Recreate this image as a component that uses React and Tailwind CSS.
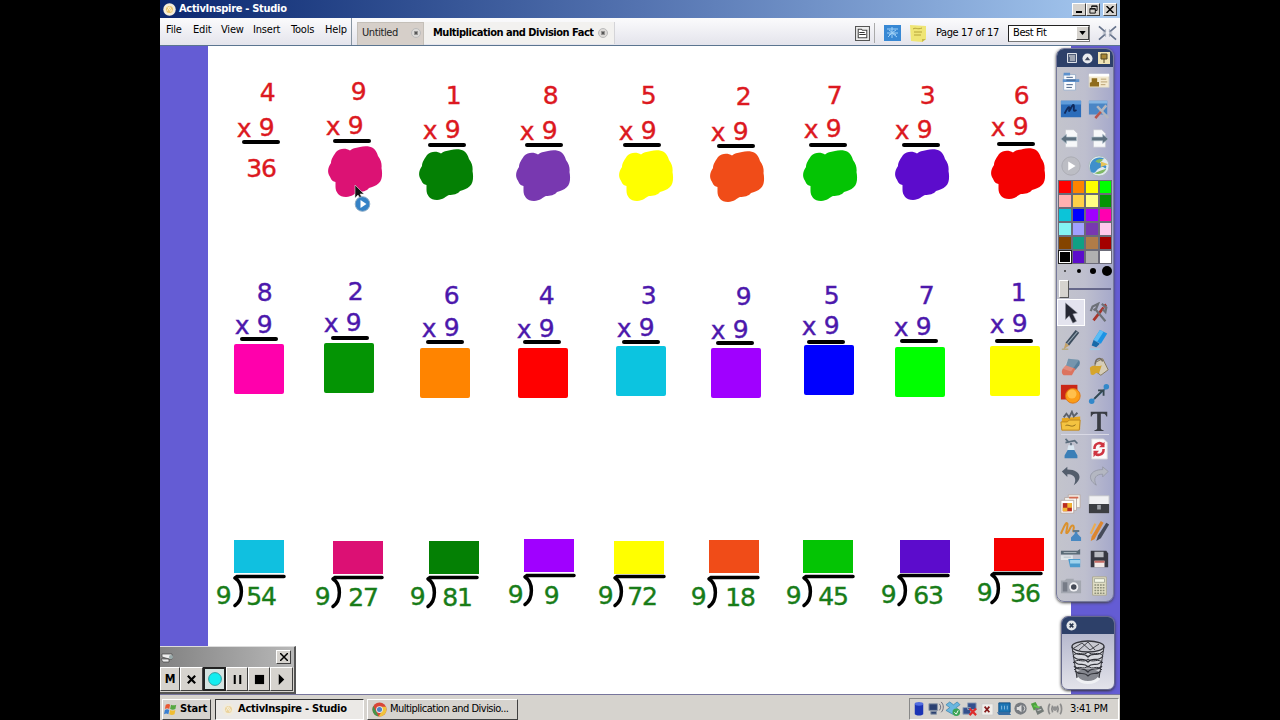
import React from "react";

const UI = "font-['DejaVu_Sans_Condensed','DejaVu_Sans',sans-serif] [font-stretch:condensed]";
const DIGIT = "absolute whitespace-nowrap leading-none text-[25px] -translate-x-1/2 -translate-y-1/2 font-['DejaVu_Sans',sans-serif] [font-stretch:normal] tracking-[-1.2px] [-webkit-text-stroke:0.4px_currentColor]";

// top digit [text, x, y], nine [x, y], bar [x, y], cover [x, y, colour]
const ROW1 = [
  { t: ["4", 267, 92], n: [266, 127], b: [242, 142], c: null },
  { t: ["9", 358, 91], n: [355, 125], b: [333, 141], c: [327.5, 146, "#dc1274"] },
  { t: ["1", 453, 95], n: [452, 129], b: [428, 145], c: [419, 149, "#048004"] },
  { t: ["8", 550, 95], n: [549, 130], b: [525, 145], c: [516, 150, "#7838b0"] },
  { t: ["5", 648, 95], n: [648, 130], b: [623, 145], c: [618.5, 150, "#ffff00"] },
  { t: ["2", 743, 96], n: [740, 131], b: [717, 146], c: [709.5, 151, "#f04c18"] },
  { t: ["7", 834, 95], n: [833, 128], b: [809, 145], c: [803, 150, "#04c404"] },
  { t: ["3", 927, 95], n: [924, 129], b: [902, 145], c: [895, 149, "#5c0ccc"] },
  { t: ["6", 1021, 95], n: [1020, 126], b: [997, 144], c: [990.5, 148, "#f40000"] },
];
const ROW2 = [
  { t: ["8", 264, 292], n: [264, 324], b: [240, 339], c: [234, 344, "#ff00ac"] },
  { t: ["2", 355, 291], n: [353, 322], b: [331, 338], c: [324, 343, "#049404"] },
  { t: ["6", 451, 295], n: [451, 327], b: [426, 342], c: [420, 348, "#ff8400"] },
  { t: ["4", 546, 295], n: [546, 328], b: [523, 342], c: [518, 348, "#ff0000"] },
  { t: ["3", 648, 295], n: [646, 327], b: [622, 342], c: [616, 346, "#0cc4e0"] },
  { t: ["9", 743, 296], n: [740, 329], b: [716, 343], c: [711, 348, "#a000ff"] },
  { t: ["5", 831, 295], n: [831, 325], b: [807, 342], c: [804, 345, "#0000ff"] },
  { t: ["7", 926, 295], n: [923, 326], b: [900, 341], c: [895, 347, "#00ff00"] },
  { t: ["1", 1018, 292], n: [1019, 323], b: [995, 341], c: [990, 346, "#ffff00"] },
];
// number, nine x, number x, y, bracket x, bracket y, cover x, cover y, colour
const ROW3 = [
  ["54", 223, 261, 595, 235, 576, 234, 540, "#10c0e0"],
  ["27", 322, 363, 596, 333, 577, 333, 541, "#dc1074"],
  ["81", 417, 457, 596, 428, 577, 429, 541, "#048004"],
  ["9", 515, 551, 594, 525, 575, 524, 539, "#a000ff"],
  ["72", 605, 642, 595, 615, 576, 614, 541, "#ffff00"],
  ["18", 698, 740, 596, 709, 577, 709, 540, "#f04c18"],
  ["45", 793, 833, 595, 804, 576, 803, 540, "#04c404"],
  ["63", 888, 928, 594, 899, 575, 900, 540, "#5c0ccc"],
  ["36", 984, 1025, 592, 992, 573, 994, 538, "#f40000"],
];

function Num({ x, y, children, color }) {
  return <span className={`${DIGIT} ${color}`} style={{ left: x - 160, top: y - 46 }}>{children}</span>;
}

function Problem({ p, color, round }) {
  const [bx, by] = p.b;
  return (
    <>
      <Num x={p.t[1]} y={p.t[2]} color={color}>{p.t[0]}</Num>
      <Num x={p.n[0] - 22.5} y={p.n[1] + 0.5} color={color}>x</Num>
      <Num x={p.n[0]} y={p.n[1]} color={color}>9</Num>
      <i className="absolute h-[4px] w-[38px] rounded-full bg-black" style={{ left: bx - 160, top: by - 48 }} />
      {p.c && !round && (
        <i className="absolute h-[50px] w-[50px] rounded-[2px]" style={{ left: p.c[0] - 160, top: p.c[1] - 46, background: p.c[2] }} />
      )}
      {p.c && round && (
        <svg className="absolute h-[51px] w-[55px]" viewBox="0 0 55 51" style={{ left: p.c[0] - 160, top: p.c[1] - 46 }}>
          <path fill={p.c[2]} d="M22 4.5C26 1.5 29 2 32 1C36 0 42 0 45 2C48 4 49 7 50 10C53 14 54 18 53.5 22C54.5 27 54.5 34 51 37C48 40 44 41 41 42C39 45 34 46 30 46C27 47 24 51 18 51C11 51 7.500 46 7.500 41V36C3 35 3 32 1.500 30C-1 26 0 21 3 17C3 13 6 9 8 6C12 2 18 2 22 4.500Z" />
        </svg>
      )}
    </>
  );
}

function Division({ d }) {
  const [n, x9, xn, y, bx, by, cx, cy, col] = d;
  return (
    <>
      <i className="absolute h-[33px] w-[50px]" style={{ left: cx - 160, top: cy - 46, background: col }} />
      <Num x={x9} y={y} color="text-[#187c18]">9</Num>
      <svg className="absolute h-[36px] w-[58px]" viewBox="0 0 58 36" style={{ left: bx - 163, top: by - 49 }} fill="none" stroke="#000" strokeLinecap="round" strokeWidth="3.5">
        <path d="M3 5L5 3.5H52M3 5C11.500 10 11.500 27 3 32.500" />
      </svg>
      <Num x={xn} y={y + 1} color="text-[#187c18]">{n}</Num>
    </>
  );
}

const page = <path d="M6 3h9l4 4v15H6z" fill="#f7f8fa" stroke="#c2c5cc" strokeWidth=".6" />;
const tools = <><path d="M6 20L17 6M17 5l3-2" stroke="#a8352c" strokeWidth="3" /><path d="M19 21L8 8M3 10l2-5 6-3-2 5-3 2M15 2l5 4-1 5-3-3" fill="none" stroke="#6d7178" strokeWidth="2.4" /></>;

const ICONS = {
  menu: <><path d="M4 5h13v17H4z" fill="#fafcff" stroke="#9bafc9" /><path d="M4 3h7v3H4zM3 10h18v3H3z" fill="#5d91cc" /><path d="M7 8h7M7 11h10M7 16h7M7 19h6" stroke="#38547e" /></>,
  card: <><path d="M1 5h22v14H1z" fill="#f4ead0" stroke="#c8c8c8" /><path d="M1 4h22v3H1z" fill="#fff" /><path d="M4 9h6v4h2v5H2v-4l2-1z" fill="#8f6c1d" /><path d="M14 10h6M14 13h7M14 16h5" stroke="#b59c6c" /></>,
  annotate: <><path d="M1 3h22v18H1z" fill="#2b6cba" /><path d="M1 3h22v4H1z" fill="#5f9bda" /><path d="M5 17c4-8 6-9 5-4-1 5 4-8 5-5s-2 8 3 5" fill="none" stroke="#102a5c" strokeWidth="2" /></>,
  deskTools: <><path d="M1 3h20v15H1z" fill="#4b86c5" /><path d="M1 3h20v3H1z" fill="#86b5e3" /><path d="M9 21L20 8M10 9l12 13" stroke="#b5b6be" strokeWidth="2.8" /><path d="M8 22l6-7" stroke="#b8564e" strokeWidth="2.8" /></>,
  prev: <>{page}<path d="M1 13l6-5v3h11v4H7v3z" fill="#5c6f7e" stroke="#a9bac6" strokeWidth=".7" /></>,
  next: <>{page}<path d="M22 13l-6-5v3H4v4h12v3z" fill="#5c6f7e" stroke="#a9bac6" strokeWidth=".7" /></>,
  play: <><circle cx="12" cy="12" r="10" fill="#bcbdc4" stroke="#aaabb2" /><path d="M9 7l8 5-8 5z" fill="#fff" /></>,
  express: <><circle cx="12" cy="12" r="11" fill="#dfeaf0" stroke="#abb9bb" /><path d="M3 18C-1 7 9 0 18 4c-6 0-7 5-2 6 4 1 5 2 3 5-3-4-6-1-9 1-2 3-4 5-7 2z" fill="#3f8fcb" /><path d="M8 7c3-3 6-3 9-2l-5 4zM7 20c5 2 11 0 13-5l-6 2z" fill="#7fb866" /><path d="M14 7l8 3-8 3z" fill="#e8c456" /></>,
  pointer: <path d="M6 1l13 11-5 1 4 8-4 2-4-8-4 4z" fill="#252732" stroke="#8b8d98" strokeWidth=".6" />,
  tools,
  pen: <><path d="M17 1l4 3L10 18l-4-3z" fill="#3d4d5e" /><path d="M19 3L8 16" stroke="#9cacb8" strokeWidth="1.2" /><path d="M6 15l4 3-6 4z" fill="#c5a268" /><path d="M2 22h7" stroke="#b19c55" /></>,
  highlighter: <><path d="M13 1l8 4-7 11-8-4z" fill="#1c93e5" /><path d="M13 1l4 2-7 11-4-2z" fill="#5bbcf5" /><path d="M6 12l7 4-4 4-5-2z" fill="#176aa9" /><path d="M2 22h11" stroke="#9ec9e4" strokeWidth="2" /></>,
  eraser: <><path d="M9 3l11 1c2 1 2 4 1 6l-4 5-11-3z" fill="#577e9b" /><path d="M6 10l11 4-4 7H4c-3-2-2-5-1-7z" fill="#dc735e" /><path d="M9 3L3 14l9 3 9-13z" fill="#fff" opacity=".18" /></>,
  fill: <><path d="M8 7l8-4 6 12-8 6-7-5z" fill="#d6cdb8" stroke="#817457" /><path d="M2 13c4-5 7 0 13-3l-3 9c-4-3-5 4-9 1z" fill="#d6a52b" /><path d="M8 9c0-7 6-8 8-3" fill="none" stroke="#746c5f" strokeWidth="1.6" /></>,
  shape: <><path d="M1 2h18v16H1z" fill="#ca2717" /><circle cx="14" cy="14" r="8" fill="#fb9d18" stroke="#dd7512" /><circle cx="13" cy="12" r="5" fill="#ffc04d" /></>,
  connector: <><path d="M4 20L21 4" stroke="#4889b5" strokeWidth="2" /><path d="M7 17L16 8M11 8h6v6" stroke="#35464f" strokeWidth="2" fill="none" /><circle cx="20" cy="4" r="3" fill="#3388ca" /><circle cx="4" cy="20" r="3" fill="#3388ca" /></>,
  resource: <><path d="M2 9l20-2v14H2z" fill="#e6a620" /><path d="M1 13h7l2-2h12l-1 11H2z" fill="#f4c340" stroke="#bd851c" /><path d="M4 8l3-4 3 4 3-6 2 5 4-4" fill="none" stroke="#5b616a" strokeWidth="2" /><path d="M6 17c4-2 6 3 11-1" stroke="#8a6819" fill="none" /></>,
  text: <path d="M3 2h18v5h-1c-1-3-2-3-6-3v16c0 1 1 2 3 2v1H7v-1c2 0 3-1 3-2V4C6 4 5 4 4 7H3z" fill="#393c43" />,
  clear: <><path d="M9 9h6v3l4 7v3H5v-3l4-7z" fill="#3b7fb7" /><path d="M9 8h6l1 5H8z" fill="#d9e6f0" /><path d="M6 1l4 4M6 5l10-2 3 3M12 4v4" fill="none" stroke="#5c6d7d" strokeWidth="1.8" /></>,
  reset: <><path d="M4 1h13l4 4v18H4z" fill="#fafafa" stroke="#d4d4d8" /><path d="M7 12c0-7 7-8 10-4M17 12c0 7-7 8-10 4" stroke="#cf3541" strokeWidth="2.8" fill="none" /><path d="M18 4v6h-6zM6 21v-7h6z" fill="#cf3541" /></>,
  undo: <path d="M2 7l6-5v3c14 0 18 10 7 17C19 14 15 10 8 10v3z" fill="#535d6c" />,
  redo: <path d="M22 7l-6-5v3C2 5-2 15 9 22 5 14 9 10 16 10v3z" fill="#b4b7c2" stroke="#9093a0" strokeWidth=".8" />,
  pages: <><path d="M9 2h13v14H9z" fill="#faf6ef" stroke="#b7aaa5" /><path d="M5 5h13v14H5z" fill="#faf6ef" stroke="#b7aaa5" /><path d="M1 8h14v14H1z" fill="#fff" stroke="#b7aaa5" /><path d="M3 11h10v9H3z" fill="#ba2d20" /><path d="M8 11h5v5H8zM3 16h5v4H3z" fill="#f1b534" /><path d="M10 4h10v2H10z" fill="#d26a51" /></>,
  reveal: <><path d="M1 3h22v10H1z" fill="#f1f1f3" stroke="#c0c2c7" /><path d="M1 12h22v10H1z" fill="#3c3e43" /><path d="M10 13h4v5h-4z" fill="#9c9fa5" /></>,
  magic: <><path d="M1 15C4 8 7 1 8 4s-3 12 0 10 3-9 6-8-1 6 1 7" fill="none" stroke="#db912c" strokeWidth="2.2" /><path d="M16 12h3v3l4 4v4H12v-4l4-4z" fill="#4788c2" /><path d="M14 12h7" stroke="#657987" strokeWidth="2" /></>,
  pens: <><path d="M14 1l3 2L7 21l-4 2 1-5z" fill="#dd862e" /><path d="M20 3l3 2-9 15-5 3 2-6z" fill="#454a59" /><path d="M8 4L3 15" stroke="#ecac50" strokeWidth="2.4" /></>,
  camera: <><path d="M1 3h18l3-2v6H1z" fill="#596a76" /><path d="M1 8h13v5H1z" fill="#dfe5e9" /><path d="M9 12h13v9H11z" fill="#4b9bcd" /><path d="M11 13h11v4H11z" fill="#9ed3ed" /><path d="M4 5h14M4 10h8" stroke="#b3bec6" /></>,
  save: <><path d="M3 3h17l2 3v15H3z" fill="#373842" /><path d="M7 4h10v6H7z" fill="#b9bac1" /><path d="M7 14h11v7H7z" fill="#f1e9e8" /><path d="M7 14h11v2H7z" fill="#c66b66" /></>,
  snapshot: <><path d="M1 6h4l2-2h8v2h8v14H1z" fill="#a3a7b0" /><circle cx="15" cy="13" r="5" fill="#efeff2" /><circle cx="15" cy="13" r="3" fill="#464b57" /><path d="M3 8h5v10H3z" fill="#777c87" /></>,
  calc: <><path d="M5 2h15v20H5z" fill="#e2dfc6" stroke="#aaa690" /><path d="M7 4h11v4H7z" fill="#f5f7e8" stroke="#a5a998" /><path d="M7 11h11M7 14h11M7 17h11M7 20h11" stroke="#8c8f7b" strokeWidth="1.7" strokeDasharray="2 1" /></>,
};

function Icon({ name }) {
  return (
    <div className={`flex items-center justify-center ${name === "pointer" ? "border border-white bg-[#e3e3ee]" : ""}`}>
      <svg viewBox="0 0 24 24" className="h-[22px] w-[22px]">{ICONS[name]}</svg>
    </div>
  );
}

const PALETTE = ["#ff0000", "#ff8400", "#ffff00", "#00ff00", "#ffb0b0", "#ffd048", "#ffff84", "#049404", "#0cc4d8", "#0000ff", "#a000ff", "#ff00b0", "#84f4f4", "#a0a0ff", "#7838b0", "#ffc8ec", "#844400", "#10a084", "#b07c48", "#a40000", "#000000", "#5c0ccc", "#b0b0b0", "#ffffff"];

function Toolbox() {
  return (
    <div className="absolute left-[896px] top-[2px] flex h-[554px] w-[58px] flex-col overflow-hidden rounded-[8px] border border-[#777a9b] bg-linear-to-r from-[#c3c4cc] via-[#bebfce] to-[#a6a9cb] shadow-[0_1px_3px_#444]">
      <div className="flex h-[18px] shrink-0 items-center justify-end gap-[5px] bg-[#2d4069] pr-[3px]">
        <svg viewBox="0 0 10 10" className="h-[10px] w-[10px]"><path d="M.5.5h9v9h-9z" fill="#4f5d79" stroke="#dee2e9" /><path d="M2 3h6M3 5h5M3 7h5" stroke="#eee" /></svg>
        <svg viewBox="0 0 12 12" className="h-[11px] w-[11px]"><circle cx="6" cy="6" r="5.5" fill="#e8eaee" /><path d="M3 8l3-4 3 4z" fill="#40485d" /></svg>
        <svg viewBox="0 0 12 12" className="h-[12px] w-[12px]"><path d="M0 0h12v12H0z" fill="#f0e3b4" /><path d="M3 2h6v5H3zM6 7v4" fill="#a88634" stroke="#554825" /></svg>
      </div>
      <div className="grid h-[113px] shrink-0 grid-cols-2 grid-rows-4">
        {["menu", "card", "annotate", "deskTools", "prev", "next", "play", "express"].map((n) => <Icon key={n} name={n} />)}
      </div>
      <div className="ml-px grid h-[84px] w-[54px] shrink-0 grid-cols-4 grid-rows-6">
        {PALETTE.map((c, i) => <i key={i} className={`border ${i === 20 ? "border-[#222] outline -outline-offset-2 outline-white" : "border-[#6b6b78]"}`} style={{ background: c }} />)}
      </div>
      <div className="ml-px grid h-[14px] w-[56px] shrink-0 grid-cols-4 items-center justify-items-center">
        <i className="h-[2px] w-[2px] rounded-full bg-[#333]" /><i className="h-[4px] w-[4px] rounded-full bg-black" /><i className="h-[6px] w-[6px] rounded-full bg-black" /><i className="h-[10px] w-[10px] rounded-full bg-black" />
      </div>
      <div className="flex h-[21px] shrink-0 items-center pl-[2px]">
        <i className="h-[18px] w-[10px] border border-[#555] border-l-white border-t-white bg-[#d6d3ce]" />
        <i className="h-[2px] w-[42px] bg-[#65678a]" />
      </div>
      <div className="grid h-[135px] shrink-0 grid-cols-2 grid-rows-5">
        {["pointer", "tools", "pen", "highlighter", "eraser", "fill", "shape", "connector", "resource", "text"].map((n) => <Icon key={n} name={n} />)}
      </div>
      <div className="mx-1 h-px shrink-0 bg-[#d9d9e5]" />
      <div className="grid h-[165px] shrink-0 grid-cols-2 grid-rows-6">
        {["clear", "reset", "undo", "redo", "pages", "reveal", "magic", "pens", "camera", "save", "snapshot", "calc"].map((n) => <Icon key={n} name={n} />)}
      </div>
    </div>
  );
}

function Trash() {
  return (
    <div className="absolute left-[901px] top-[570px] flex h-[74px] w-[54px] flex-col overflow-hidden rounded-[7px] border border-[#66698c] bg-linear-to-b from-[#a9acc5] to-[#e3e3ea] shadow-[0_1px_3px_#333]">
      <div className="flex h-[17px] shrink-0 items-center bg-[#2d4069] pl-[4px]">
        <svg viewBox="0 0 12 12" className="h-[11px] w-[11px]"><circle cx="6" cy="6" r="5.5" fill="#e3e6e9" /><path d="M4 4l4 4M8 4L4 8" stroke="#29364e" strokeWidth="1.7" /></svg>
      </div>
      <svg viewBox="0 0 36 46" className="mx-auto mt-[5px] h-[46px] w-[36px]" fill="none" stroke="#34353c">
        <path d="M2 7l4 31c5 7 19 7 24 0l4-31z" fill="#d9dae0" stroke="none" />
        <path d="M6 34c5-6 19-6 24 0l-1 6c-5 5-17 5-22 0z" fill="#85878f" stroke="none" />
        <path d="M3 12c5 7 10 0 15 6 5-6 10 1 15-6M3 17c5 7 10 0 15 6 5-6 10 1 15-6M4 22c5 7 9 0 14 6 5-6 9 1 14-6M4 27c5 6 9 0 14 6 5-6 9 0 14-6M5 32c5 5 9 0 13 5 4-5 8 0 13-5" strokeWidth="1.2" />
        <path d="M3 17c5-6 10 1 15-4 5 5 10-2 15 4M3 24c5-6 10 1 15-4 5 5 10-2 15 4M4 31c5-6 9 1 14-4 5 5 9-2 14 4" strokeWidth="1" />
        <ellipse cx="18" cy="7.5" rx="16" ry="5.500" fill="#c9cad2" strokeWidth="1.4" />
        <path d="M4 9l8-5 8 7 9-6M9 11l9-8 7 8" strokeWidth=".9" /><path d="M2 8l5 31M34 8l-5 31" />
        <path d="M7 39c5 6 17 6 22 0" stroke="#f0f1f4" strokeWidth="3" />
      </svg>
    </div>
  );
}

const RAISED = "border border-b-[#404040] border-l-white border-r-[#404040] border-t-white bg-[#d6d3ce]";

function Recorder() {
  const glyphs = [
    null,
    <path d="M2 2l8 8M10 2l-8 8" stroke="#000" strokeWidth="2.4" />,
    <circle cx="6" cy="6" r="5.500" fill="#12edf0" stroke="#2b8f92" strokeWidth=".7" />,
    <path d="M3 1v10M9 1v10" stroke="#000" strokeWidth="2.2" />,
    <path d="M1 1h10v10H1z" />,
    <path d="M3 0l6 6-6 6z" />,
  ];
  const sizes = ["w-[20px]", "w-[23px]", "w-[23px]", "w-[22px]", "w-[22px]", "w-[23px]"];
  return (
    <div className="absolute left-0 top-[600px] flex h-[48px] w-[136px] flex-col border-b-2 border-r-2 border-t border-b-[#555] border-r-[#555] border-t-[#ddd] bg-[#d6d3ce]">
      <div className="flex h-[20px] items-center justify-between bg-linear-to-r from-[#828282] to-[#b8b8b8] pr-[3px]">
        <svg viewBox="0 0 16 12" className="h-[12px] w-[16px]"><path d="M1 8h8v3H3zM2 3h10v5H9l-7-2z" fill="#eee" stroke="#444" strokeWidth=".7" /><circle cx="11" cy="6" r="2" fill="#9aa" /></svg>
        <div className={`flex h-[14px] w-[15px] items-center justify-center ${RAISED}`}><svg viewBox="0 0 8 8" className="h-[8px] w-[8px]"><path d="M0 0l8 8M8 0L0 8" stroke="#000" strokeWidth="1.5" /></svg></div>
      </div>
      <div className="flex flex-1">
        {glyphs.map((g, i) => (
          <div key={i} className={`flex h-[24px] items-center justify-center ${sizes[i]} ${i === 2 ? "border-2 border-[#222] bg-[#d5e3e1]" : RAISED}`}>
            {i === 0 ? <span className="text-[12px] font-bold leading-none">M</span> : <svg viewBox="0 0 12 12" className={i === 2 ? "h-[14px] w-[14px] shrink-0" : "h-[11px] w-[11px]"}>{g}</svg>}
          </div>
        ))}
      </div>
    </div>
  );
}

function CloseDot() {
  return <svg viewBox="0 0 10 10" className="h-[10px] w-[10px] shrink-0"><circle cx="5" cy="5" r="4.5" fill="#dcdad8" stroke="#bbb" /><path d="M3.5 3.5l3 3M6.5 3.5l-3 3" stroke="#555" strokeWidth="1.5" /></svg>;
}

function Logo() {
  return <svg viewBox="0 0 14 14" className="h-[13px] w-[13px] shrink-0"><circle cx="7" cy="7" r="6.7" fill="#f4edd9" /><circle cx="7" cy="7" r="3.8" fill="#ecc56a" /><path d="M4 9l3-5 3 5M5 4l4 6" stroke="#fff4d0" fill="none" /></svg>;
}

function Header() {
  const box = `flex h-[13px] w-[14px] items-center justify-center ${RAISED}`;
  return (
    <>
      <div className="flex h-[18px] items-center bg-linear-to-r from-[#0c2870] via-[#5473b0] to-[#a6c9f0] pl-[3px] pr-[3px] text-white">
        <Logo />
        <span className="ml-[3px] whitespace-nowrap pt-px text-[11px] font-bold tracking-[-0.3px]">ActivInspire - Studio</span>
        <div className="ml-auto flex">
          <div className={box}><i className="mt-[6px] h-[2px] w-[6px] bg-black" /></div>
          <div className={box}><svg viewBox="0 0 10 10" className="h-[9px] w-[9px]" fill="none" stroke="#000"><path d="M3 3V1h6v5H7M3 1.5h6M1 4h6v5H1zM1 4.5h6" /></svg></div>
          <div className={`ml-[3px] ${box}`}><svg viewBox="0 0 8 8" className="h-[7px] w-[8px]"><path d="M0 0l8 8M8 0L0 8" stroke="#000" strokeWidth="1.7" /></svg></div>
        </div>
      </div>
      <div className="flex h-[28px] border-b border-[#5b7590] bg-linear-to-b from-[#fbfbfc] to-[#e4e4ec] text-[11px] text-black">
        <div className="flex h-[24px] w-[191px] items-center whitespace-nowrap pl-[6px] tracking-[-0.2px]">
          <span className="w-[27px]">File</span><span className="w-[28px]">Edit</span><span className="w-[32px]">View</span><span className="w-[38px]">Insert</span><span className="w-[34px]">Tools</span><span>Help</span>
        </div>
        <div className="flex w-[73px] items-end border-l border-[#8794a1] pl-[5px]">
          <div className="flex h-[23px] w-full items-center justify-between border border-b-0 border-[#c4bfb8] bg-[#d6cfc9] pb-[2px] pl-[4px] pr-[2px] tracking-[-0.4px] text-[#222]"><span>Untitled</span><CloseDot /></div>
        </div>
        <div className="mt-[4px] flex h-[22px] w-[191px] items-center border-r border-[#d4d4d8] bg-[#f2f1ef] pl-[9px]">
          <span className="w-[161px] overflow-hidden whitespace-nowrap text-[11px] font-bold tracking-[-0.48px]">Multiplication and Division Fact</span>
          <span className="ml-[4px] flex"><CloseDot /></span>
        </div>
        <div className="ml-auto flex items-center pr-[3px] pt-[3px]">
          <svg viewBox="0 0 14 14" className="h-[15px] w-[15px]"><path d="M.5.5h13v13H.5z" fill="#eee" stroke="#555" /><path d="M3 3h3l1 1h4v7H3z" fill="#fff" stroke="#444" /><path d="M4 6h5M4 8h6" stroke="#333" /></svg>
          <i className="ml-[4px] h-[20px] w-px bg-[#aaa]" />
          <svg viewBox="0 0 17 16" className="ml-[9px] h-[16px] w-[17px]"><path d="M0 0h17v16H0z" fill="#3888d4" /><path d="M3 4h11M8 2v11M3 8h11M4 12l4-4 5 4M5 5l7 5M12 5l-7 5" stroke="#9fd0f6" fill="none" /></svg>
          <svg viewBox="0 0 17 17" className="ml-[9px] h-[17px] w-[17px]"><path d="M0 0l16 1v13l-4 3-11-1z" fill="#efe575" /><path d="M3 4c3-2 4 1 9-1M4 7h8M4 10h7" stroke="#b5a43b" fill="none" /><path d="M12 17l4-3h-4z" fill="#c8b94a" /></svg>
          <span className="ml-[9px] w-[64px] whitespace-nowrap tracking-[-0.4px]">Page 17 of 17</span>
          <div className="ml-[8px] flex h-[17px] w-[82px] items-center border border-[#777] border-l-[#222] border-t-[#222] bg-white pl-[4px]">
            <span className="whitespace-nowrap pt-px tracking-[-0.4px]">Best Fit</span>
            <span className={`ml-auto flex h-[14px] w-[13px] items-center justify-center ${RAISED}`}><svg viewBox="0 0 8 5" className="h-[4px] w-[7px]"><path d="M0 0h8L4 5z" /></svg></span>
          </div>
          <svg viewBox="0 0 20 16" className="ml-[8px] h-[16px] w-[19px]" stroke="#66738b" fill="none" strokeWidth="1.8"><path d="M1 1l7 6M19 1l-7 6M1 15l7-6M19 15l-7-6" /><path d="M5 7h3V4M15 7h-3V4M5 9h3v3M15 9h-3v3" stroke="#a5adbb" strokeWidth="1" /></svg>
        </div>
      </div>
    </>
  );
}

function Tray() {
  const icons = [
    <><path d="M4 3v11c2 2 7 2 9 0V3" fill="#1c34b5" /><ellipse cx="8.5" cy="3" rx="4.5" ry="2" fill="#526de1" /></>,
    <><path d="M1 3h9v7H1zM3 11h6v3H3z" fill="#2c4171" stroke="#8995a8" /><path d="M12 3c2 2 2 5 0 7M14 1c3 3 3 8 0 11" stroke="#667" fill="none" /></>,
    <><path d="M1 4l4-3 4 3 4-3 3 3-4 3 3 3-7 4-7-4 4-3z" fill="#69b6df" stroke="#357da8" strokeWidth=".7" /><circle cx="12" cy="12" r="4" fill="#3aa455" /><path d="M10 12l2 2 2-4" stroke="#fff" fill="none" /></>,
    <><path d="M1 7h8v7H1zM6 2h9v7H6z" fill="#33508d" stroke="#98a4b7" /><path d="M8 8l7 7M15 8l-7 7" stroke="#dd2d2d" strokeWidth="2.3" /></>,
    <><path d="M3 3h12v12H3z" fill="#f0eeea" stroke="#ccc" /><path d="M6 6l5 6M11 6l-5 6" stroke="#851b1b" strokeWidth="1.8" /></>,
    <><path d="M3 2h12v10H3z" fill="#1c75b4" stroke="#135082" /><path d="M1 12h13l2 3H3z" fill="#376ca3" /><path d="M6 5v4M9 5v4M12 5v4" stroke="#8bbee1" /></>,
    <><circle cx="8" cy="8" r="6.500" fill="#777b80" /><path d="M4 6.500h2l3-2.500v8L6 9.500H4z" fill="#ddd" /><path d="M11 5c2 2 2 4 0 6" stroke="#ddd" fill="none" /></>,
    <><path d="M1 3l5-2 3 6-5 3z" fill="#4ea13f" /><path d="M5 8l7-3 3 6-7 4z" fill="#747b78" /><path d="M4 5l6 2" stroke="#61c54c" strokeWidth="2" /><path d="M8 10l4-1" stroke="#ddd" /></>,
    <><path d="M3 3c-2 3-2 8 0 11M14 3c2 3 2 8 0 11M6 5c-1 2-1 5 0 7M11 5c1 2 1 5 0 7" stroke="#8b8b8b" strokeWidth="1.8" fill="none" /><circle cx="8.500" cy="8" r="2.500" fill="#929292" /></>,
  ];
  return (
    <div className="ml-auto flex h-[22px] w-[210px] items-center border border-b-white border-l-[#888] border-r-white border-t-[#888] pl-[1px]">
      <div className="flex gap-[1px]">{icons.map((g, i) => <svg key={i} viewBox="0 0 17 17" className="h-[16px] w-[16px]">{g}</svg>)}</div>
      <span className="ml-[7px] whitespace-nowrap pt-px text-[11px] tracking-[-0.3px]">3:41 PM</span>
    </div>
  );
}

function Taskbar() {
  return (
    <div className="flex h-[26px] items-center border-t border-[#77759c] bg-[#d6d3ce] pl-[2px] pr-[1px] pt-[3px] text-[11px]">
      <div className={`flex h-[21px] w-[49px] items-center gap-[2px] pl-[1px] ${RAISED}`}>
        <svg viewBox="0 0 16 16" className="h-[16px] w-[14px] shrink-0"><path d="M2 3c2-1 4-1 5 0L6 8C4 7 3 7 1 8z" fill="#e95832" /><path d="M8 3c2 1 4 1 6 0l-1 5c-2 1-4 1-6 0z" fill="#55a842" /><path d="M1 9c2-1 3-1 5 0l-1 5c-2-1-3-1-5 0z" fill="#397fd2" /><path d="M7 9c2 1 4 1 6 0l-1 5c-2 1-4 1-6 0z" fill="#f0bd32" /></svg>
        <span className="text-[11px] font-bold tracking-[-0.2px]">Start</span>
      </div>
      <div className="ml-[4px] flex h-[21px] w-[149px] items-center border border-b-white border-l-[#333] border-r-white border-t-[#333] bg-[#ebe9e6] pl-[6px]">
        <span className="opacity-60"><Logo /></span><span className="ml-[3px] whitespace-nowrap pt-px font-bold tracking-[-0.25px]">ActivInspire - Studio</span>
      </div>
      <div className={`ml-[3px] flex h-[21px] w-[151px] items-center pl-[4px] ${RAISED}`}>
        <svg viewBox="0 0 16 16" className="h-[15px] w-[15px] shrink-0"><circle cx="8" cy="8" r="7.5" fill="#d84638" /><path d="M1.5 4.2L7 15.4A7.5 7.5 0 0 1 1.5 4.2" fill="#42964c" /><path d="M8 5h6.8A7.5 7.5 0 0 1 7 15.4L11 9z" fill="#efc33c" /><circle cx="8" cy="8" r="3.6" fill="#eee" /><circle cx="8" cy="8" r="2.7" fill="#4c82c6" /></svg>
        <span className="ml-[3px] whitespace-nowrap tracking-[-0.52px]">Multiplication and Divisio...</span>
      </div>
      <Tray />
    </div>
  );
}

export default function App() {
  return (
    <div className="flex h-[720px] w-[1280px] justify-center overflow-hidden bg-black">
      <div className={`flex h-[720px] w-[960px] flex-col bg-white ${UI}`}>
        <Header />
        <main className="relative flex h-[648px] justify-between overflow-hidden bg-white">
          <div className="h-[600px] w-[48px] bg-[#645cd4]" />
          <div className="h-full w-[49px] bg-[#645cd4]" />
          {ROW1.map((p, i) => <Problem key={i} p={p} color="text-[#dc1820]" round />)}
          <Num x={261} y={168} color="text-[#dc1820]">36</Num>
          {ROW2.map((p, i) => <Problem key={i} p={p} color="text-[#4c18ac]" />)}
          {ROW3.map((d, i) => <Division key={i} d={d} />)}
          <svg className="absolute left-[194px] top-[138px] h-[30px] w-[20px]" viewBox="0 0 20 30">
            <path d="M1 1v13l3-3 3 5 2-1-3-5h4z" fill="#111" stroke="#ddd" strokeWidth=".6" />
            <circle cx="8.500" cy="20" r="7.3" fill="#3582c6" stroke="#8aaac5" /><path d="M6.500 16l6 4-6 4z" fill="#fff" />
          </svg>
          <Toolbox />
          <Trash />
          <Recorder />
        </main>
        <Taskbar />
      </div>
    </div>
  );
}
